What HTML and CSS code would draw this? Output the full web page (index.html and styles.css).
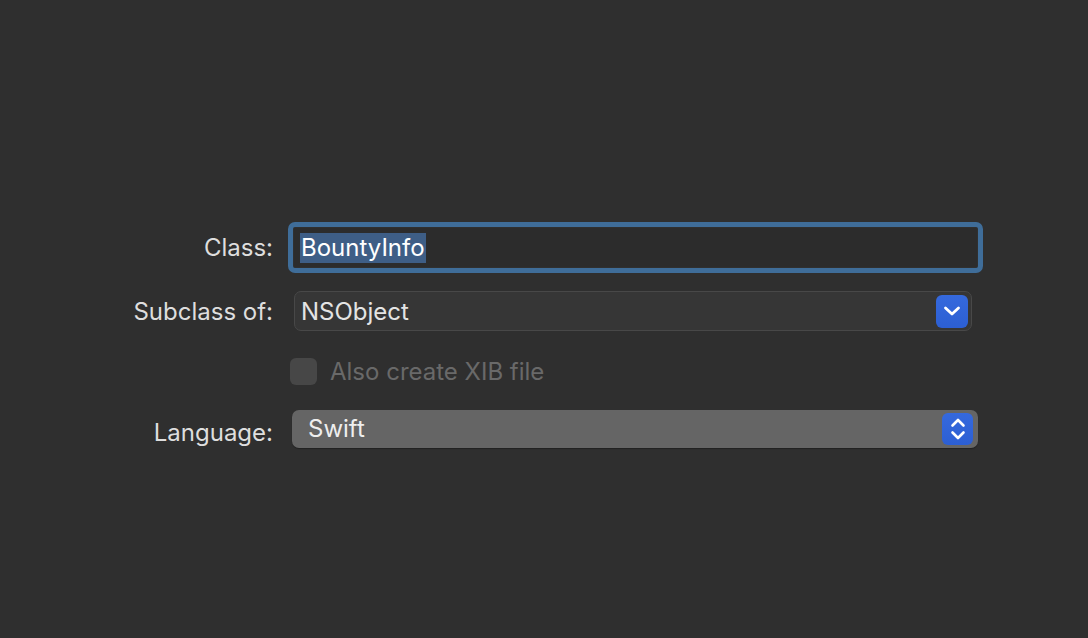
FILE: index.html
```html
<!DOCTYPE html>
<html lang="en">
<head>
<meta charset="utf-8">
<title>New File</title>
<link rel="stylesheet" href="styles.css">
</head>
<body>
<div class="form">
  <div class="row row-class">
    <label class="label">Class:</label>
    <div class="control">
      <div class="textfield">
        <span class="selected">BountyInfo</span>
      </div>
    </div>
  </div>
  <div class="row row-subclass">
    <label class="label">Subclass of:</label>
    <div class="control">
      <div class="combo">
        <span class="value">NSObject</span>
        <span class="combo-btn">
          <svg width="18" height="10" viewBox="0 0 18 10"><path d="M2.5 2 L9 8 L15.5 2" fill="none" stroke="#fff" stroke-width="2.8" stroke-linecap="round" stroke-linejoin="round"/></svg>
        </span>
      </div>
    </div>
  </div>
  <div class="row row-check">
    <span class="label"></span>
    <div class="control">
      <div class="check">
        <span class="box"></span>
        <span class="check-text">Also create XIB file</span>
      </div>
    </div>
  </div>
  <div class="row row-lang">
    <label class="label lang-label">Language:</label>
    <div class="control">
      <div class="popup">
        <span class="value">Swift</span>
        <span class="popup-btn">
          <svg width="16" height="24" viewBox="0 0 16 24"><path d="M2.5 8.5 L8 3 L13.5 8.5 M2.5 15.5 L8 21 L13.5 15.5" fill="none" stroke="#fff" stroke-width="2.6" stroke-linecap="round" stroke-linejoin="round"/></svg>
        </span>
      </div>
    </div>
  </div>
</div>
</body>
</html>
```
FILE: styles.css
```css
html, body {
  margin: 0;
  padding: 0;
  background: #2f2f2f;
  height: 100%;
}
body {
  font-family: "Inter", "Liberation Sans", sans-serif;
  color: #e2e2e2;
}
.form {
  padding-top: 222px;
  display: flex;
  flex-direction: column;
}
.row {
  display: flex;
  align-items: center;
}
.label {
  width: 273px;
  flex: none;
  text-align: right;
  font-size: 24px;
  color: #dedede;
  padding-right: 15px;
  box-sizing: content-box;
}
.lang-label {
  padding-top: 6px;
}
.control {
  flex: none;
}
.row-class { height: 51px; }
.textfield {
  box-sizing: border-box;
  width: 695px;
  height: 51px;
  border: 5px solid #3f6d99;
  border-radius: 7px;
  background: #2c2c2c;
  box-shadow: inset 0 0 0 1px #303030;
  display: flex;
  align-items: center;
  padding-left: 7px;
  padding-top: 1px;
}
.selected {
  background: #3e5e86;
  color: #ffffff;
  font-size: 24px;
  line-height: 30px;
  padding: 0 1px;
}
.row-subclass { margin-top: 18px; height: 40px; }
.combo {
  box-sizing: border-box;
  margin-left: 6px;
  width: 678px;
  height: 40px;
  border: 1px solid #484848;
  border-radius: 7px;
  background: #363636;
  display: flex;
  align-items: center;
  justify-content: space-between;
  padding: 0 3px 0 6px;
}
.value {
  font-size: 24px;
  color: #e4e4e4;
}
.combo-btn {
  width: 32px;
  height: 33px;
  border-radius: 6px;
  background: linear-gradient(#3569dd, #2c5fd3);
  display: flex;
  align-items: center;
  justify-content: center;
}
.row-check { margin-top: 27px; height: 27px; }
.check {
  margin-left: 2px;
  display: flex;
  align-items: center;
}
.box {
  width: 27px;
  height: 27px;
  border-radius: 6px;
  background: #474747;
}
.check-text {
  margin-left: 13px;
  font-size: 24px;
  color: #696969;
}
.row-lang { margin-top: 25px; height: 38px; }
.popup {
  box-sizing: border-box;
  margin-left: 4px;
  width: 686px;
  height: 38px;
  border-radius: 7px;
  background: #656565;
  box-shadow: 0 1px 1px rgba(0,0,0,0.3);
  display: flex;
  align-items: center;
  justify-content: space-between;
  padding: 0 5px 0 16px;
}
.popup .value { color: #eeeeee; margin-top: -2px; }
.popup-btn {
  width: 31px;
  height: 32px;
  border-radius: 6px;
  background: linear-gradient(#3569dd, #2c5fd3);
  display: flex;
  align-items: center;
  justify-content: center;
}
```
